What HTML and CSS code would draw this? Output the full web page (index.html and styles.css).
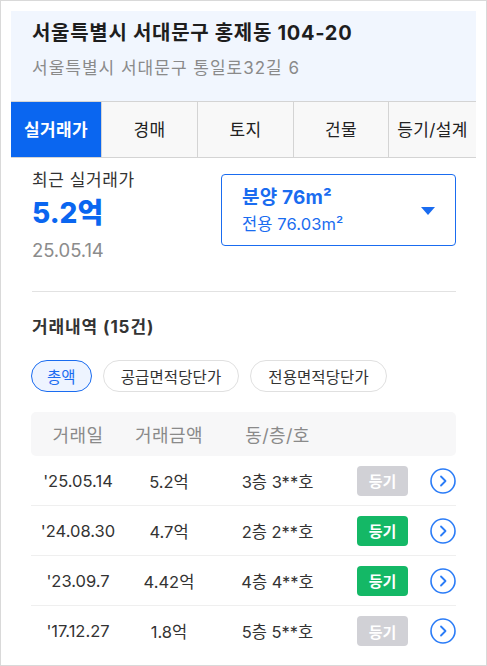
FILE: index.html
```html
<!DOCTYPE html>
<html lang="ko">
<head>
<meta charset="utf-8">
<link rel="stylesheet" href="styles.css">
</head>
<body>
<div class="frame">
  <header class="head">
    <h1 class="title">서울특별시 서대문구 홍제동 104-20</h1>
    <p class="sub">서울특별시 서대문구 통일로32길 6</p>
  </header>
  <nav class="tabs">
    <div class="tab active">실거래가</div>
    <div class="tab">경매</div>
    <div class="tab">토지</div>
    <div class="tab">건물</div>
    <div class="tab">등기/설계</div>
  </nav>
  <main class="body">
    <section class="recent">
      <div class="price">
        <div class="label">최근 실거래가</div>
        <div class="amount">5.2억</div>
        <div class="date">25.05.14</div>
      </div>
      <div class="select">
        <div class="select-text">
          <div class="sel-main">분양 76m²</div>
          <div class="sel-sub">전용 76.03m²</div>
        </div>
        <svg class="caret" width="14" height="8" viewBox="0 0 14 8"><path d="M0 0H14L7 8Z" fill="#1a6cf0"/></svg>
      </div>
    </section>
    <hr class="divider">
    <h2 class="list-title">거래내역 (15건)</h2>
    <div class="chips">
      <span class="chip on">총액</span>
      <span class="chip">공급면적당단가</span>
      <span class="chip">전용면적당단가</span>
    </div>
    <div class="table">
      <div class="row thead">
        <span class="c-date">거래일</span>
        <span class="c-amt">거래금액</span>
        <span class="c-unit">동/층/호</span>
        <span class="c-badge"></span>
        <span class="c-go"></span>
      </div>
      <div class="row">
        <span class="c-date">'25.05.14</span>
        <span class="c-amt">5.2억</span>
        <span class="c-unit">3층 3**호</span>
        <span class="c-badge"><span class="badge off">등기</span></span>
        <span class="c-go"><svg width="26" height="26" viewBox="0 0 26 26"><circle cx="13" cy="13" r="12" fill="none" stroke="#2b7cf7" stroke-width="1.6"/><path d="M11 8.5L15.5 13L11 17.5" fill="none" stroke="#2b7cf7" stroke-width="1.8" stroke-linecap="round" stroke-linejoin="round"/></svg></span>
      </div>
      <div class="row">
        <span class="c-date">'24.08.30</span>
        <span class="c-amt">4.7억</span>
        <span class="c-unit">2층 2**호</span>
        <span class="c-badge"><span class="badge ok">등기</span></span>
        <span class="c-go"><svg width="26" height="26" viewBox="0 0 26 26"><circle cx="13" cy="13" r="12" fill="none" stroke="#2b7cf7" stroke-width="1.6"/><path d="M11 8.5L15.5 13L11 17.5" fill="none" stroke="#2b7cf7" stroke-width="1.8" stroke-linecap="round" stroke-linejoin="round"/></svg></span>
      </div>
      <div class="row">
        <span class="c-date">'23.09.7</span>
        <span class="c-amt">4.42억</span>
        <span class="c-unit">4층 4**호</span>
        <span class="c-badge"><span class="badge ok">등기</span></span>
        <span class="c-go"><svg width="26" height="26" viewBox="0 0 26 26"><circle cx="13" cy="13" r="12" fill="none" stroke="#2b7cf7" stroke-width="1.6"/><path d="M11 8.5L15.5 13L11 17.5" fill="none" stroke="#2b7cf7" stroke-width="1.8" stroke-linecap="round" stroke-linejoin="round"/></svg></span>
      </div>
      <div class="row last">
        <span class="c-date">'17.12.27</span>
        <span class="c-amt">1.8억</span>
        <span class="c-unit">5층 5**호</span>
        <span class="c-badge"><span class="badge off">등기</span></span>
        <span class="c-go"><svg width="26" height="26" viewBox="0 0 26 26"><circle cx="13" cy="13" r="12" fill="none" stroke="#2b7cf7" stroke-width="1.6"/><path d="M11 8.5L15.5 13L11 17.5" fill="none" stroke="#2b7cf7" stroke-width="1.8" stroke-linecap="round" stroke-linejoin="round"/></svg></span>
      </div>
    </div>
  </main>
</div>
</body>
</html>
```
FILE: styles.css
```css
* { box-sizing: border-box; }
html, body { margin: 0; padding: 0; background: #fff; }
body {
  font-family: "Inter", "Noto Sans CJK KR", sans-serif;
  color: #222;
}
.frame {
  width: 487px;
  height: 666px;
  border: 1px solid #d9d9d9;
  padding: 10px 10px 0 10px;
  overflow: hidden;
}
.head {
  background: #f1f6fe;
  height: 90px;
  padding: 7px 21px 0;
}
.title {
  margin: 0;
  font-size: 20px;
  font-weight: 700;
  line-height: 30px;
  color: #1e1e1e;
  letter-spacing: 0.7px;
}
.sub {
  margin: 8px 0 0;
  font-size: 17px;
  line-height: 24px;
  color: #8a8a8a;
  letter-spacing: 1px;
}
.tabs {
  display: flex;
  height: 57px;
  border-top: 1px solid #d4d4d4;
  border-bottom: 1px solid #d4d4d4;
  background: #f8f8f8;
}
.tab {
  flex: 0 0 auto;
  display: flex;
  align-items: center;
  justify-content: center;
  font-size: 17px;
  letter-spacing: 0.4px;
  color: #222;
  border-left: 1px solid #d4d4d4;
  padding-bottom: 2px;
}
.tab:nth-child(1) { width: 90px; border-left: 0; }
.tab:nth-child(2) { width: 96px; }
.tab:nth-child(3) { width: 96px; }
.tab:nth-child(4) { width: 95px; }
.tab:nth-child(5) { width: 88px; }
.tab.active {
  background: #0a66f0;
  color: #fff;
  font-weight: 700;
}
.body {
  padding: 0 20px 0 21px;
}
.recent {
  display: flex;
  justify-content: space-between;
  align-items: flex-start;
  padding-top: 10px;
}
.label {
  font-size: 17px;
  line-height: 24px;
  letter-spacing: 0.6px;
  color: #333;
}
.amount {
  font-size: 28px;
  font-weight: 800;
  color: #0a66f0;
  line-height: 36px;
  margin-top: 3px;
}
.date {
  font-size: 18.5px;
  line-height: 24px;
  color: #8c8c8c;
  margin-top: 7px;
  letter-spacing: -0.1px;
}
.select {
  width: 235px;
  height: 72px;
  margin-top: 6px;
  border: 1px solid #1a6cf0;
  border-radius: 4px;
  display: flex;
  align-items: center;
  justify-content: space-between;
  padding: 0 20px 0 20px;
  color: #1a6cf0;
}
.sel-main {
  font-size: 19px;
  font-weight: 700;
  line-height: 24px;
  letter-spacing: 0.2px;
}
.sel-sub {
  font-size: 16.5px;
  line-height: 22px;
  margin-top: 3px;
  letter-spacing: 0.1px;
}
.caret { margin-top: 2px; }
.divider {
  border: 0;
  border-top: 1px solid #e2e2e2;
  margin: 29px 0 0;
}
.list-title {
  margin: 22px 0 0;
  font-size: 17px;
  font-weight: 700;
  line-height: 26px;
  letter-spacing: 0.9px;
  color: #333;
}
.chips {
  display: flex;
  gap: 11px;
  margin-top: 20px;
  margin-left: -1px;
}
.chip {
  height: 32px;
  padding: 0 17px;
  border: 1px solid #e0e0e0;
  border-radius: 16px;
  display: flex;
  align-items: center;
  font-size: 15.5px;
  letter-spacing: 0.1px;
  color: #333;
  background: #fff;
}
.chip.on {
  border-color: #1a6cf0;
  background: #eef4ff;
  color: #1a6cf0;
  padding: 0 15px;
}
.table {
  margin-top: 20px;
  margin-left: -1px;
}
.row {
  display: flex;
  align-items: center;
  height: 50px;
  border-bottom: 1px solid #efefef;
  font-size: 16.5px;
  color: #333;
}
.row.last { border-bottom: 0; }
.row.thead {
  height: 44px;
  background: #f7f7f8;
  border-radius: 5px;
  border-bottom: 0;
  color: #8a8a8a;
  font-size: 18px;
  letter-spacing: 0.4px;
}
.c-date { width: 94px; text-align: center; }
.c-amt { width: 88px; text-align: center; }
.c-unit { width: 129px; text-align: center; }
.c-badge { width: 81px; display: flex; justify-content: center; }
.c-go { width: 33px; display: flex; justify-content: flex-end; }
.badge {
  width: 51px;
  height: 30px;
  border-radius: 4px;
  display: flex;
  align-items: center;
  justify-content: center;
  font-size: 15px;
  font-weight: 700;
  color: #fff;
}
.badge.off { background: #d1d1d6; }
.badge.ok { background: #14b866; }
```
